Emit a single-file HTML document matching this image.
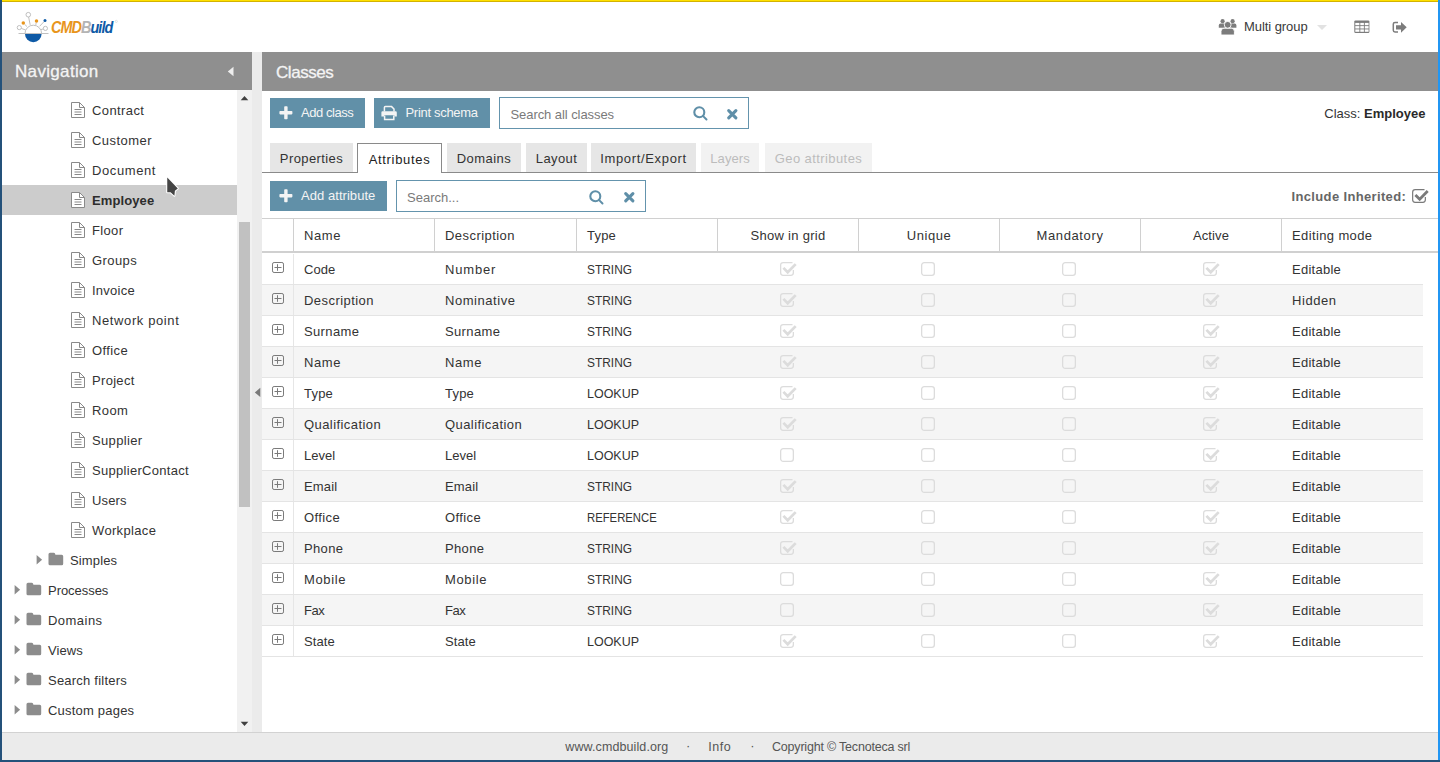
<!DOCTYPE html>
<html><head><meta charset="utf-8"><title>CMDBuild</title>
<style>
*{box-sizing:border-box;margin:0;padding:0}
html,body{width:1440px;height:762px;overflow:hidden;background:#fff;font-family:"Liberation Sans",sans-serif;color:#333;font-size:13px}
.a{position:absolute}
.t{position:absolute;white-space:nowrap;line-height:13px;font-size:13px}
svg{position:absolute;overflow:visible}
</style></head><body>
<svg style="left:0;top:0" width="130" height="50" viewBox="0 0 130 50">
<g stroke="#b9b9b9" stroke-width="0.9" fill="none">
<line x1="18.5" y1="33.5" x2="48.5" y2="33.5"/>
<path d="M25 33.5 A8.3 8.3 0 0 1 41.6 33.5"/>
<circle cx="28.3" cy="14.7" r="2.3" fill="#fff"/>
<line x1="28.6" y1="17.0" x2="30.2" y2="24.9"/>
<circle cx="19.3" cy="27.6" r="2.1" fill="#fff"/>
<line x1="21.3" y1="28.4" x2="25.6" y2="30.0"/>
<line x1="24.5" y1="24.2" x2="27.0" y2="26.6"/>
<line x1="36.2" y1="22.5" x2="35.8" y2="24.9"/>
<circle cx="45.4" cy="28.4" r="2.1" fill="#fff"/>
<line x1="43.3" y1="28.9" x2="41.0" y2="29.6"/>
<line x1="44.2" y1="21.5" x2="39.6" y2="26.3"/>
</g>
<path d="M25 34 H41.6 A8.3 8.3 0 0 1 25 34 Z" fill="#0e5aa6"/>
<circle cx="23.3" cy="23.1" r="1.75" fill="#e8951c"/>
<circle cx="36.5" cy="20.9" r="1.75" fill="#e8951c"/>
<circle cx="45.0" cy="20.5" r="1.5" fill="#0e5aa6"/>
<circle cx="116.3" cy="21.4" r="1.1" fill="none" stroke="#c9c9c9" stroke-width="0.5"/>
</svg>
<div class="t" style="left:50.8px;top:19.2px;font-size:16.5px;line-height:16.5px;font-weight:700;font-style:italic;letter-spacing:-1.1px;transform:scaleX(0.875);transform-origin:0 0"><span style="color:#e8951c">CMD</span><span style="color:#b4b4b4">B</span><span style="color:#0e5aa6">uild</span></div>
<svg style="left:1218px;top:18px" width="19" height="18" viewBox="1218 18 19 18" fill="#7c7c7c">
<circle cx="1222.6" cy="21.2" r="2.1"/><circle cx="1232.6" cy="21.2" r="2.1"/>
<path d="M1218.8 27.8 V25.4 Q1218.8 23.6 1220.6 23.6 H1224.6 Q1225.2 23.6 1225.2 24.4 V27.8 Z"/>
<path d="M1236.4 27.8 V25.4 Q1236.4 23.6 1234.6 23.6 H1230.6 Q1230 23.6 1230 24.4 V27.8 Z"/>
<path d="M1221 35 V31.4 Q1221 28.2 1224 28.2 H1231.4 Q1234.4 28.2 1234.4 31.4 V35 Z" stroke="#fff" stroke-width="0.9"/>
<circle cx="1227.7" cy="24.8" r="3.4" stroke="#fff" stroke-width="0.9"/>
</svg>
<div class="t" style="left:1244px;top:19.80px;font-size:13px;line-height:13px;color:#3a3a3a;font-weight:400;letter-spacing:-0.07px;">Multi group</div>
<svg style="left:1316px;top:24px" width="12" height="7" viewBox="0 0 12 7"><path d="M1 1 H11 L6 6 Z" fill="#e2e2e2"/></svg>
<svg style="left:1354px;top:20px" width="16" height="14" viewBox="1354 20 16 14">
<rect x="1354.3" y="20.4" width="15.1" height="12.5" rx="1.2" fill="#7c7c7c"/>
<g fill="#fff">
<rect x="1355.3" y="22.9" width="4.1" height="2.3"/><rect x="1360.3" y="22.9" width="3.6" height="2.3"/><rect x="1364.8" y="22.9" width="3.8" height="2.3"/>
<rect x="1355.3" y="26.1" width="4.1" height="2.4"/><rect x="1360.3" y="26.1" width="3.6" height="2.4"/><rect x="1364.8" y="26.1" width="3.8" height="2.4"/>
<rect x="1355.3" y="29.4" width="4.1" height="2.4"/><rect x="1360.3" y="29.4" width="3.6" height="2.4"/><rect x="1364.8" y="29.4" width="3.8" height="2.4"/>
</g></svg>
<svg style="left:1390px;top:20px" width="18" height="14" viewBox="1390 20 18 14">
<path d="M1398 22.4 H1395 Q1393.3 22.4 1393.3 24.1 V30.3 Q1393.3 32 1395 32 H1398" fill="none" stroke="#7c7c7c" stroke-width="1.5"/>
<path d="M1396 25.3 H1401 V22 L1406.7 27.3 L1401 32.7 V29.4 H1396 Z" fill="#7c7c7c"/>
</svg>
<div class="a" style="left:2px;top:52px;width:250px;height:38px;background:#8f8f8f;"></div>
<div class="t" style="left:15px;top:62.61px;font-size:17px;line-height:17px;color:#f4f4f4;font-weight:400;letter-spacing:0.33px;-webkit-text-stroke:0.3px #f4f4f4;">Navigation</div>
<svg style="left:227.2px;top:66px" width="8" height="11" viewBox="0 0 8 11"><path d="M6.5 0.8 V10.2 L0.8 5.5 Z" fill="#eeeeee"/></svg>
<div class="a" style="left:252px;top:52px;width:10px;height:680px;background:#ebebeb;"></div>
<div class="a" style="left:237px;top:90px;width:15px;height:642px;background:#f1f1f1;"></div>
<div class="a" style="left:239px;top:222px;width:11px;height:285px;background:#c1c1c1;"></div>
<svg style="left:240px;top:95px" width="9" height="6" viewBox="0 0 9 6"><path d="M0.7 5.2 H8.3 L4.5 0.9 Z" fill="#404040"/></svg>
<svg style="left:240px;top:721px" width="9" height="6" viewBox="0 0 9 6"><path d="M0.7 0.8 H8.3 L4.5 5.1 Z" fill="#404040"/></svg>
<svg style="left:254px;top:387px" width="7" height="11" viewBox="0 0 7 11"><path d="M6.3 0.8 V10 L0.8 5.4 Z" fill="#7a7a7a"/></svg>
<div class="a" style="left:2px;top:185px;width:235px;height:30px;background:#cccccc;"></div>
<svg style="left:70px;top:101px" width="16" height="18" viewBox="0 0 16 18">
<path d="M1.5 1.5 H9.5 L14.5 6.5 V16.5 H1.5 Z" fill="#fff" stroke="#8a8a8a" stroke-width="1"/>
<path d="M9.5 1.5 V6.5 H14.5" fill="none" stroke="#8a8a8a" stroke-width="1"/>
<g stroke="#8a8a8a" stroke-width="1"><line x1="4.5" y1="8.5" x2="11.5" y2="8.5"/><line x1="4.5" y1="11" x2="11.5" y2="11"/><line x1="4.5" y1="13.5" x2="11.5" y2="13.5"/></g>
</svg>
<div class="t" style="left:92px;top:104.00px;font-size:13px;line-height:13px;color:#333;font-weight:400;letter-spacing:0.399px;">Contract</div>
<svg style="left:70px;top:131px" width="16" height="18" viewBox="0 0 16 18">
<path d="M1.5 1.5 H9.5 L14.5 6.5 V16.5 H1.5 Z" fill="#fff" stroke="#8a8a8a" stroke-width="1"/>
<path d="M9.5 1.5 V6.5 H14.5" fill="none" stroke="#8a8a8a" stroke-width="1"/>
<g stroke="#8a8a8a" stroke-width="1"><line x1="4.5" y1="8.5" x2="11.5" y2="8.5"/><line x1="4.5" y1="11" x2="11.5" y2="11"/><line x1="4.5" y1="13.5" x2="11.5" y2="13.5"/></g>
</svg>
<div class="t" style="left:92px;top:134.00px;font-size:13px;line-height:13px;color:#333;font-weight:400;letter-spacing:0.451px;">Customer</div>
<svg style="left:70px;top:161px" width="16" height="18" viewBox="0 0 16 18">
<path d="M1.5 1.5 H9.5 L14.5 6.5 V16.5 H1.5 Z" fill="#fff" stroke="#8a8a8a" stroke-width="1"/>
<path d="M9.5 1.5 V6.5 H14.5" fill="none" stroke="#8a8a8a" stroke-width="1"/>
<g stroke="#8a8a8a" stroke-width="1"><line x1="4.5" y1="8.5" x2="11.5" y2="8.5"/><line x1="4.5" y1="11" x2="11.5" y2="11"/><line x1="4.5" y1="13.5" x2="11.5" y2="13.5"/></g>
</svg>
<div class="t" style="left:92px;top:164.00px;font-size:13px;line-height:13px;color:#333;font-weight:400;letter-spacing:0.6px;">Document</div>
<svg style="left:70px;top:191px" width="16" height="18" viewBox="0 0 16 18">
<path d="M1.5 1.5 H9.5 L14.5 6.5 V16.5 H1.5 Z" fill="#fff" stroke="#8a8a8a" stroke-width="1"/>
<path d="M9.5 1.5 V6.5 H14.5" fill="none" stroke="#8a8a8a" stroke-width="1"/>
<g stroke="#8a8a8a" stroke-width="1"><line x1="4.5" y1="8.5" x2="11.5" y2="8.5"/><line x1="4.5" y1="11" x2="11.5" y2="11"/><line x1="4.5" y1="13.5" x2="11.5" y2="13.5"/></g>
</svg>
<div class="t" style="left:92px;top:194.00px;font-size:13px;line-height:13px;color:#2d2d2d;font-weight:700;letter-spacing:0.1px;">Employee</div>
<svg style="left:70px;top:221px" width="16" height="18" viewBox="0 0 16 18">
<path d="M1.5 1.5 H9.5 L14.5 6.5 V16.5 H1.5 Z" fill="#fff" stroke="#8a8a8a" stroke-width="1"/>
<path d="M9.5 1.5 V6.5 H14.5" fill="none" stroke="#8a8a8a" stroke-width="1"/>
<g stroke="#8a8a8a" stroke-width="1"><line x1="4.5" y1="8.5" x2="11.5" y2="8.5"/><line x1="4.5" y1="11" x2="11.5" y2="11"/><line x1="4.5" y1="13.5" x2="11.5" y2="13.5"/></g>
</svg>
<div class="t" style="left:92px;top:224.00px;font-size:13px;line-height:13px;color:#333;font-weight:400;letter-spacing:0.346px;">Floor</div>
<svg style="left:70px;top:251px" width="16" height="18" viewBox="0 0 16 18">
<path d="M1.5 1.5 H9.5 L14.5 6.5 V16.5 H1.5 Z" fill="#fff" stroke="#8a8a8a" stroke-width="1"/>
<path d="M9.5 1.5 V6.5 H14.5" fill="none" stroke="#8a8a8a" stroke-width="1"/>
<g stroke="#8a8a8a" stroke-width="1"><line x1="4.5" y1="8.5" x2="11.5" y2="8.5"/><line x1="4.5" y1="11" x2="11.5" y2="11"/><line x1="4.5" y1="13.5" x2="11.5" y2="13.5"/></g>
</svg>
<div class="t" style="left:92px;top:254.00px;font-size:13px;line-height:13px;color:#333;font-weight:400;letter-spacing:0.426px;">Groups</div>
<svg style="left:70px;top:281px" width="16" height="18" viewBox="0 0 16 18">
<path d="M1.5 1.5 H9.5 L14.5 6.5 V16.5 H1.5 Z" fill="#fff" stroke="#8a8a8a" stroke-width="1"/>
<path d="M9.5 1.5 V6.5 H14.5" fill="none" stroke="#8a8a8a" stroke-width="1"/>
<g stroke="#8a8a8a" stroke-width="1"><line x1="4.5" y1="8.5" x2="11.5" y2="8.5"/><line x1="4.5" y1="11" x2="11.5" y2="11"/><line x1="4.5" y1="13.5" x2="11.5" y2="13.5"/></g>
</svg>
<div class="t" style="left:92px;top:284.00px;font-size:13px;line-height:13px;color:#333;font-weight:400;letter-spacing:0.256px;">Invoice</div>
<svg style="left:70px;top:311px" width="16" height="18" viewBox="0 0 16 18">
<path d="M1.5 1.5 H9.5 L14.5 6.5 V16.5 H1.5 Z" fill="#fff" stroke="#8a8a8a" stroke-width="1"/>
<path d="M9.5 1.5 V6.5 H14.5" fill="none" stroke="#8a8a8a" stroke-width="1"/>
<g stroke="#8a8a8a" stroke-width="1"><line x1="4.5" y1="8.5" x2="11.5" y2="8.5"/><line x1="4.5" y1="11" x2="11.5" y2="11"/><line x1="4.5" y1="13.5" x2="11.5" y2="13.5"/></g>
</svg>
<div class="t" style="left:92px;top:314.00px;font-size:13px;line-height:13px;color:#333;font-weight:400;letter-spacing:0.612px;">Network point</div>
<svg style="left:70px;top:341px" width="16" height="18" viewBox="0 0 16 18">
<path d="M1.5 1.5 H9.5 L14.5 6.5 V16.5 H1.5 Z" fill="#fff" stroke="#8a8a8a" stroke-width="1"/>
<path d="M9.5 1.5 V6.5 H14.5" fill="none" stroke="#8a8a8a" stroke-width="1"/>
<g stroke="#8a8a8a" stroke-width="1"><line x1="4.5" y1="8.5" x2="11.5" y2="8.5"/><line x1="4.5" y1="11" x2="11.5" y2="11"/><line x1="4.5" y1="13.5" x2="11.5" y2="13.5"/></g>
</svg>
<div class="t" style="left:92px;top:344.00px;font-size:13px;line-height:13px;color:#333;font-weight:400;letter-spacing:0.397px;">Office</div>
<svg style="left:70px;top:371px" width="16" height="18" viewBox="0 0 16 18">
<path d="M1.5 1.5 H9.5 L14.5 6.5 V16.5 H1.5 Z" fill="#fff" stroke="#8a8a8a" stroke-width="1"/>
<path d="M9.5 1.5 V6.5 H14.5" fill="none" stroke="#8a8a8a" stroke-width="1"/>
<g stroke="#8a8a8a" stroke-width="1"><line x1="4.5" y1="8.5" x2="11.5" y2="8.5"/><line x1="4.5" y1="11" x2="11.5" y2="11"/><line x1="4.5" y1="13.5" x2="11.5" y2="13.5"/></g>
</svg>
<div class="t" style="left:92px;top:374.00px;font-size:13px;line-height:13px;color:#333;font-weight:400;letter-spacing:0.313px;">Project</div>
<svg style="left:70px;top:401px" width="16" height="18" viewBox="0 0 16 18">
<path d="M1.5 1.5 H9.5 L14.5 6.5 V16.5 H1.5 Z" fill="#fff" stroke="#8a8a8a" stroke-width="1"/>
<path d="M9.5 1.5 V6.5 H14.5" fill="none" stroke="#8a8a8a" stroke-width="1"/>
<g stroke="#8a8a8a" stroke-width="1"><line x1="4.5" y1="8.5" x2="11.5" y2="8.5"/><line x1="4.5" y1="11" x2="11.5" y2="11"/><line x1="4.5" y1="13.5" x2="11.5" y2="13.5"/></g>
</svg>
<div class="t" style="left:92px;top:404.00px;font-size:13px;line-height:13px;color:#333;font-weight:400;letter-spacing:0.382px;">Room</div>
<svg style="left:70px;top:431px" width="16" height="18" viewBox="0 0 16 18">
<path d="M1.5 1.5 H9.5 L14.5 6.5 V16.5 H1.5 Z" fill="#fff" stroke="#8a8a8a" stroke-width="1"/>
<path d="M9.5 1.5 V6.5 H14.5" fill="none" stroke="#8a8a8a" stroke-width="1"/>
<g stroke="#8a8a8a" stroke-width="1"><line x1="4.5" y1="8.5" x2="11.5" y2="8.5"/><line x1="4.5" y1="11" x2="11.5" y2="11"/><line x1="4.5" y1="13.5" x2="11.5" y2="13.5"/></g>
</svg>
<div class="t" style="left:92px;top:434.00px;font-size:13px;line-height:13px;color:#333;font-weight:400;letter-spacing:0.342px;">Supplier</div>
<svg style="left:70px;top:461px" width="16" height="18" viewBox="0 0 16 18">
<path d="M1.5 1.5 H9.5 L14.5 6.5 V16.5 H1.5 Z" fill="#fff" stroke="#8a8a8a" stroke-width="1"/>
<path d="M9.5 1.5 V6.5 H14.5" fill="none" stroke="#8a8a8a" stroke-width="1"/>
<g stroke="#8a8a8a" stroke-width="1"><line x1="4.5" y1="8.5" x2="11.5" y2="8.5"/><line x1="4.5" y1="11" x2="11.5" y2="11"/><line x1="4.5" y1="13.5" x2="11.5" y2="13.5"/></g>
</svg>
<div class="t" style="left:92px;top:464.00px;font-size:13px;line-height:13px;color:#333;font-weight:400;letter-spacing:0.302px;">SupplierContact</div>
<svg style="left:70px;top:491px" width="16" height="18" viewBox="0 0 16 18">
<path d="M1.5 1.5 H9.5 L14.5 6.5 V16.5 H1.5 Z" fill="#fff" stroke="#8a8a8a" stroke-width="1"/>
<path d="M9.5 1.5 V6.5 H14.5" fill="none" stroke="#8a8a8a" stroke-width="1"/>
<g stroke="#8a8a8a" stroke-width="1"><line x1="4.5" y1="8.5" x2="11.5" y2="8.5"/><line x1="4.5" y1="11" x2="11.5" y2="11"/><line x1="4.5" y1="13.5" x2="11.5" y2="13.5"/></g>
</svg>
<div class="t" style="left:92px;top:494.00px;font-size:13px;line-height:13px;color:#333;font-weight:400;letter-spacing:0.141px;">Users</div>
<svg style="left:70px;top:521px" width="16" height="18" viewBox="0 0 16 18">
<path d="M1.5 1.5 H9.5 L14.5 6.5 V16.5 H1.5 Z" fill="#fff" stroke="#8a8a8a" stroke-width="1"/>
<path d="M9.5 1.5 V6.5 H14.5" fill="none" stroke="#8a8a8a" stroke-width="1"/>
<g stroke="#8a8a8a" stroke-width="1"><line x1="4.5" y1="8.5" x2="11.5" y2="8.5"/><line x1="4.5" y1="11" x2="11.5" y2="11"/><line x1="4.5" y1="13.5" x2="11.5" y2="13.5"/></g>
</svg>
<div class="t" style="left:92px;top:524.00px;font-size:13px;line-height:13px;color:#333;font-weight:400;letter-spacing:0.34px;">Workplace</div>
<svg style="left:35.5px;top:554.0px" width="8" height="12" viewBox="0 0 8 12"><path d="M0.6 1.1 L6.1 5.75 L0.6 10.4 Z" fill="#8c8c8c"/></svg>
<svg style="left:48px;top:552.0px" width="16" height="14" viewBox="0 0 16 14">
<path d="M0.5 2.2 Q0.5 0.7 2 0.7 H5.6 Q6.9 0.7 7.2 2.0 L7.4 2.8 H13.7 Q15.2 2.8 15.2 4.3 V11.75 Q15.2 13.25 13.7 13.25 H2 Q0.5 13.25 0.5 11.75 Z" fill="#8c8c8c"/>
</svg>
<div class="t" style="left:70px;top:554.00px;font-size:13px;line-height:13px;color:#333;font-weight:400;letter-spacing:0.148px;">Simples</div>
<svg style="left:13.5px;top:584.0px" width="8" height="12" viewBox="0 0 8 12"><path d="M0.6 1.1 L6.1 5.75 L0.6 10.4 Z" fill="#8c8c8c"/></svg>
<svg style="left:26px;top:582.0px" width="16" height="14" viewBox="0 0 16 14">
<path d="M0.5 2.2 Q0.5 0.7 2 0.7 H5.6 Q6.9 0.7 7.2 2.0 L7.4 2.8 H13.7 Q15.2 2.8 15.2 4.3 V11.75 Q15.2 13.25 13.7 13.25 H2 Q0.5 13.25 0.5 11.75 Z" fill="#8c8c8c"/>
</svg>
<div class="t" style="left:48px;top:584.00px;font-size:13px;line-height:13px;color:#333;font-weight:400;letter-spacing:-0.042px;">Processes</div>
<svg style="left:13.5px;top:614.0px" width="8" height="12" viewBox="0 0 8 12"><path d="M0.6 1.1 L6.1 5.75 L0.6 10.4 Z" fill="#8c8c8c"/></svg>
<svg style="left:26px;top:612.0px" width="16" height="14" viewBox="0 0 16 14">
<path d="M0.5 2.2 Q0.5 0.7 2 0.7 H5.6 Q6.9 0.7 7.2 2.0 L7.4 2.8 H13.7 Q15.2 2.8 15.2 4.3 V11.75 Q15.2 13.25 13.7 13.25 H2 Q0.5 13.25 0.5 11.75 Z" fill="#8c8c8c"/>
</svg>
<div class="t" style="left:48px;top:614.00px;font-size:13px;line-height:13px;color:#333;font-weight:400;letter-spacing:0.471px;">Domains</div>
<svg style="left:13.5px;top:644.0px" width="8" height="12" viewBox="0 0 8 12"><path d="M0.6 1.1 L6.1 5.75 L0.6 10.4 Z" fill="#8c8c8c"/></svg>
<svg style="left:26px;top:642.0px" width="16" height="14" viewBox="0 0 16 14">
<path d="M0.5 2.2 Q0.5 0.7 2 0.7 H5.6 Q6.9 0.7 7.2 2.0 L7.4 2.8 H13.7 Q15.2 2.8 15.2 4.3 V11.75 Q15.2 13.25 13.7 13.25 H2 Q0.5 13.25 0.5 11.75 Z" fill="#8c8c8c"/>
</svg>
<div class="t" style="left:48px;top:644.00px;font-size:13px;line-height:13px;color:#333;font-weight:400;letter-spacing:0.048px;">Views</div>
<svg style="left:13.5px;top:674.0px" width="8" height="12" viewBox="0 0 8 12"><path d="M0.6 1.1 L6.1 5.75 L0.6 10.4 Z" fill="#8c8c8c"/></svg>
<svg style="left:26px;top:672.0px" width="16" height="14" viewBox="0 0 16 14">
<path d="M0.5 2.2 Q0.5 0.7 2 0.7 H5.6 Q6.9 0.7 7.2 2.0 L7.4 2.8 H13.7 Q15.2 2.8 15.2 4.3 V11.75 Q15.2 13.25 13.7 13.25 H2 Q0.5 13.25 0.5 11.75 Z" fill="#8c8c8c"/>
</svg>
<div class="t" style="left:48px;top:674.00px;font-size:13px;line-height:13px;color:#333;font-weight:400;letter-spacing:0.222px;">Search filters</div>
<svg style="left:13.5px;top:704.0px" width="8" height="12" viewBox="0 0 8 12"><path d="M0.6 1.1 L6.1 5.75 L0.6 10.4 Z" fill="#8c8c8c"/></svg>
<svg style="left:26px;top:702.0px" width="16" height="14" viewBox="0 0 16 14">
<path d="M0.5 2.2 Q0.5 0.7 2 0.7 H5.6 Q6.9 0.7 7.2 2.0 L7.4 2.8 H13.7 Q15.2 2.8 15.2 4.3 V11.75 Q15.2 13.25 13.7 13.25 H2 Q0.5 13.25 0.5 11.75 Z" fill="#8c8c8c"/>
</svg>
<div class="t" style="left:48px;top:704.00px;font-size:13px;line-height:13px;color:#333;font-weight:400;letter-spacing:0.207px;">Custom pages</div>
<svg style="left:160px;top:170px" width="24" height="30" viewBox="160 170 24 30">
<path d="M167.25 177.4 V192.3 H170.6 L174.4 195.7 L174.9 190.8 L177.8 188.4 Z" fill="#444" stroke="#fff" stroke-width="2.1" stroke-linejoin="round" paint-order="stroke"/>
</svg>
<div class="a" style="left:262px;top:52px;width:1176px;height:39px;background:#8f8f8f;"></div>
<div class="t" style="left:276px;top:63.61px;font-size:17px;line-height:17px;color:#f4f4f4;font-weight:400;letter-spacing:-0.45px;-webkit-text-stroke:0.3px #f4f4f4;">Classes</div>
<div class="a" style="left:270px;top:98px;width:95px;height:30px;background:#6190a8;"></div>
<svg style="left:278.5px;top:105.6px" width="14" height="14" viewBox="0 0 14 14"><path d="M5.2 1 Q5.2 0.2 6 0.2 H7.8 Q8.6 0.2 8.6 1 V5 H12.6 Q13.4 5 13.4 5.8 V7.6 Q13.4 8.4 12.6 8.4 H8.6 V12.4 Q8.6 13.2 7.8 13.2 H6 Q5.2 13.2 5.2 12.4 V8.4 H1.2 Q0.4 8.4 0.4 7.6 V5.8 Q0.4 5 1.2 5 H5.2 Z" fill="#f4f4f4"/></svg>
<div class="t" style="left:301px;top:106.00px;font-size:13px;line-height:13px;color:#f4f4f4;font-weight:400;letter-spacing:-0.45px;">Add class</div>
<div class="a" style="left:374px;top:98px;width:116px;height:30px;background:#6190a8;"></div>
<svg style="left:381px;top:106px" width="17" height="15" viewBox="0 0 17 15">
<path d="M3.4 5.5 V1.6 Q3.4 0.6 4.4 0.6 H10.6 L13 3 V5.5" fill="none" stroke="#f4f4f4" stroke-width="1.5"/>
<path d="M1.5 5.2 H14.6 Q15.8 5.2 15.8 6.4 V10.6 H13.4 V9.2 H3.0 V10.6 H0.4 V6.4 Q0.4 5.2 1.5 5.2 Z" fill="#f4f4f4"/>
<path d="M3.6 9.6 V13.6 H12.8 V9.6" fill="none" stroke="#f4f4f4" stroke-width="1.5"/>
</svg>
<div class="t" style="left:405.5px;top:106.20px;font-size:13px;line-height:13px;color:#f4f4f4;font-weight:400;letter-spacing:-0.3px;">Print schema</div>
<div class="a" style="left:499px;top:97px;width:250px;height:32px;background:#fff;border:1px solid #6494ad"></div>
<div class="t" style="left:510.5px;top:107.80px;font-size:13px;line-height:13px;color:#7a7a7a;font-weight:400;letter-spacing:-0.07px;">Search all classes</div>
<svg style="left:692.5px;top:106.3px" width="16" height="16" viewBox="0 0 16 16">
<circle cx="6.3" cy="6.3" r="5.0" fill="none" stroke="#5f8fa8" stroke-width="2.1"/>
<line x1="9.9" y1="9.9" x2="13.5" y2="13.5" stroke="#5f8fa8" stroke-width="2.0" stroke-linecap="round"/>
</svg>
<svg style="left:726.9px;top:108.6px" width="12" height="12" viewBox="0 0 12 12">
<path d="M1.7 1.7 L8.9 8.9 M8.9 1.7 L1.7 8.9" stroke="#5f8fa8" stroke-width="3.1" stroke-linecap="round"/>
</svg>
<div class="t" style="left:1324.3px;top:106.80px;font-size:13px;line-height:13px;color:#333;font-weight:400;letter-spacing:0px;">Class: <b style="color:#2a2a2a">Employee</b></div>
<div class="a" style="left:262px;top:172px;width:1176px;height:1px;background:#8a8a8a;"></div>
<div class="a" style="left:270px;top:143px;width:83px;height:29px;background:#e6e6e6;"></div>
<div class="t" style="left:270.0px;width:83px;text-align:center;top:152.00px;font-size:13px;line-height:13px;color:#333;font-weight:400;letter-spacing:0.408px">Properties</div>
<div class="a" style="left:357px;top:143px;width:85px;height:30px;background:#fff;border:1px solid #8a8a8a;border-bottom:none"></div>
<div class="t" style="left:357.0px;width:85px;text-align:center;top:153.00px;font-size:13px;line-height:13px;color:#222;font-weight:400;letter-spacing:0.6679999999999999px">Attributes</div>
<div class="a" style="left:447px;top:143px;width:74px;height:29px;background:#e6e6e6;"></div>
<div class="t" style="left:447.0px;width:74px;text-align:center;top:152.00px;font-size:13px;line-height:13px;color:#333;font-weight:400;letter-spacing:0.471px">Domains</div>
<div class="a" style="left:526px;top:143px;width:61px;height:29px;background:#e6e6e6;"></div>
<div class="t" style="left:526.0px;width:61px;text-align:center;top:152.00px;font-size:13px;line-height:13px;color:#333;font-weight:400;letter-spacing:0.388px">Layout</div>
<div class="a" style="left:591px;top:143px;width:105px;height:29px;background:#e6e6e6;"></div>
<div class="t" style="left:591.0px;width:105px;text-align:center;top:152.00px;font-size:13px;line-height:13px;color:#333;font-weight:400;letter-spacing:0.661px">Import/Export</div>
<div class="a" style="left:701px;top:143px;width:58px;height:29px;background:#f2f2f2;"></div>
<div class="t" style="left:701.0px;width:58px;text-align:center;top:152.00px;font-size:13px;line-height:13px;color:#bcbcbc;font-weight:400;letter-spacing:0.067px">Layers</div>
<div class="a" style="left:765px;top:143px;width:107px;height:29px;background:#f2f2f2;"></div>
<div class="t" style="left:765.0px;width:107px;text-align:center;top:152.00px;font-size:13px;line-height:13px;color:#bcbcbc;font-weight:400;letter-spacing:0.413px">Geo attributes</div>
<div class="a" style="left:270px;top:181px;width:117px;height:30px;background:#6190a8;"></div>
<svg style="left:278.5px;top:188.8px" width="14" height="14" viewBox="0 0 14 14"><path d="M5.2 1 Q5.2 0.2 6 0.2 H7.8 Q8.6 0.2 8.6 1 V5 H12.6 Q13.4 5 13.4 5.8 V7.6 Q13.4 8.4 12.6 8.4 H8.6 V12.4 Q8.6 13.2 7.8 13.2 H6 Q5.2 13.2 5.2 12.4 V8.4 H1.2 Q0.4 8.4 0.4 7.6 V5.8 Q0.4 5 1.2 5 H5.2 Z" fill="#f4f4f4"/></svg>
<div class="t" style="left:301px;top:189.30px;font-size:13px;line-height:13px;color:#f4f4f4;font-weight:400;letter-spacing:0.05px;">Add attribute</div>
<div class="a" style="left:396px;top:180px;width:250px;height:32px;background:#fff;border:1px solid #6494ad"></div>
<div class="t" style="left:407px;top:190.60px;font-size:13px;line-height:13px;color:#7a7a7a;font-weight:400;letter-spacing:0px;">Search...</div>
<svg style="left:589.1px;top:189.7px" width="16" height="16" viewBox="0 0 16 16">
<circle cx="6.3" cy="6.3" r="5.0" fill="none" stroke="#5f8fa8" stroke-width="2.1"/>
<line x1="9.9" y1="9.9" x2="13.5" y2="13.5" stroke="#5f8fa8" stroke-width="2.0" stroke-linecap="round"/>
</svg>
<svg style="left:624px;top:191.5px" width="12" height="12" viewBox="0 0 12 12">
<path d="M1.7 1.7 L8.9 8.9 M8.9 1.7 L1.7 8.9" stroke="#5f8fa8" stroke-width="3.1" stroke-linecap="round"/>
</svg>
<div class="t" style="left:1291.5px;top:190.10px;font-size:13px;line-height:13px;color:#666;font-weight:700;letter-spacing:0.35px;">Include Inherited:</div>
<svg style="left:1411.1px;top:188px" width="19" height="16" viewBox="-1 -1 19 16">
<path d="M12.5 0.65 H3.15 Q0.65 0.65 0.65 3.15 V10.85 Q0.65 13.35 3.15 13.35 H10.85 Q13.35 13.35 13.35 10.85 V8" fill="none" stroke="#7a7a7a" stroke-width="1.2"/>
<path d="M3.4 5.9 L7.7 10.3 L15.7 2.1" fill="none" stroke="#7a7a7a" stroke-width="2.8" stroke-linejoin="miter"/>
</svg>
<div class="a" style="left:262px;top:218px;width:1176px;height:1px;background:#d0d0d0;"></div>
<div class="a" style="left:262px;top:251px;width:1176px;height:2px;background:#d0d0d0;"></div>
<div class="a" style="left:293px;top:219px;width:1px;height:32px;background:#d0d0d0;"></div>
<div class="a" style="left:434px;top:219px;width:1px;height:32px;background:#d0d0d0;"></div>
<div class="a" style="left:576px;top:219px;width:1px;height:32px;background:#d0d0d0;"></div>
<div class="a" style="left:717px;top:219px;width:1px;height:32px;background:#d0d0d0;"></div>
<div class="a" style="left:858px;top:219px;width:1px;height:32px;background:#d0d0d0;"></div>
<div class="a" style="left:999px;top:219px;width:1px;height:32px;background:#d0d0d0;"></div>
<div class="a" style="left:1140px;top:219px;width:1px;height:32px;background:#d0d0d0;"></div>
<div class="a" style="left:1281px;top:219px;width:1px;height:32px;background:#d0d0d0;"></div>
<div class="t" style="left:304px;top:229.00px;font-size:13px;line-height:13px;color:#333;font-weight:400;letter-spacing:0.576px;">Name</div>
<div class="t" style="left:445px;top:229.00px;font-size:13px;line-height:13px;color:#333;font-weight:400;letter-spacing:0.44px;">Description</div>
<div class="t" style="left:587px;top:229.00px;font-size:13px;line-height:13px;color:#333;font-weight:400;letter-spacing:0.223px;">Type</div>
<div class="t" style="left:717.5px;width:141px;text-align:center;top:229.00px;font-size:13px;line-height:13px;color:#333;font-weight:400;letter-spacing:0.283px">Show in grid</div>
<div class="t" style="left:858.5px;width:141px;text-align:center;top:229.00px;font-size:13px;line-height:13px;color:#333;font-weight:400;letter-spacing:0.564px">Unique</div>
<div class="t" style="left:999.5px;width:141px;text-align:center;top:229.00px;font-size:13px;line-height:13px;color:#333;font-weight:400;letter-spacing:0.624px">Mandatory</div>
<div class="t" style="left:1140.5px;width:141px;text-align:center;top:229.00px;font-size:13px;line-height:13px;color:#333;font-weight:400;letter-spacing:0.139px">Active</div>
<div class="t" style="left:1292px;top:229.00px;font-size:13px;line-height:13px;color:#333;font-weight:400;letter-spacing:0.378px;">Editing mode</div>
<div class="a" style="left:262px;top:254px;width:1161px;height:31px;background:#fff;border-bottom:1px solid #e4e4e4"></div>
<div class="a" style="left:293px;top:254px;width:1px;height:30px;background:#e6e6e6;"></div>
<svg style="left:272px;top:262px" width="13" height="12" viewBox="0 0 13 12">
<rect x="0.5" y="0.5" width="11" height="10" rx="1.6" fill="none" stroke="#7a7a7a" stroke-width="1"/>
<path d="M2.5 5.5 H9.5 M5.5 2.2 V8.8" stroke="#7a7a7a" stroke-width="1"/>
</svg>
<div class="t" style="left:304px;top:262.50px;font-size:13px;line-height:13px;color:#333;font-weight:400;letter-spacing:0.078px;">Code</div>
<div class="t" style="left:445px;top:262.50px;font-size:13px;line-height:13px;color:#333;font-weight:400;letter-spacing:0.838px;">Number</div>
<div class="t" style="left:587px;top:262.50px;font-size:13px;line-height:13px;color:#333;font-weight:400;letter-spacing:0px;transform:scaleX(0.9161);transform-origin:0 0;">STRING</div>
<svg style="left:779.2px;top:261.1px" width="19" height="16" viewBox="-1 -1 19 16">
<path d="M12.5 0.65 H3.15 Q0.65 0.65 0.65 3.15 V10.85 Q0.65 13.35 3.15 13.35 H10.85 Q13.35 13.35 13.35 10.85 V8" fill="none" stroke="#dcdcdc" stroke-width="1.3"/>
<path d="M3.4 5.9 L7.7 10.3 L15.7 2.1" fill="none" stroke="#dcdcdc" stroke-width="2.7" stroke-linejoin="miter"/>
</svg>
<svg style="left:920.3px;top:261.3px" width="16" height="16" viewBox="-1 -1 16 16"><rect x="0.65" y="0.65" width="12.7" height="12.7" rx="2.6" fill="none" stroke="#dcdcdc" stroke-width="1.3"/></svg>
<svg style="left:1061.3px;top:261.3px" width="16" height="16" viewBox="-1 -1 16 16"><rect x="0.65" y="0.65" width="12.7" height="12.7" rx="2.6" fill="none" stroke="#dcdcdc" stroke-width="1.3"/></svg>
<svg style="left:1202.2px;top:261.1px" width="19" height="16" viewBox="-1 -1 19 16">
<path d="M12.5 0.65 H3.15 Q0.65 0.65 0.65 3.15 V10.85 Q0.65 13.35 3.15 13.35 H10.85 Q13.35 13.35 13.35 10.85 V8" fill="none" stroke="#dcdcdc" stroke-width="1.3"/>
<path d="M3.4 5.9 L7.7 10.3 L15.7 2.1" fill="none" stroke="#dcdcdc" stroke-width="2.7" stroke-linejoin="miter"/>
</svg>
<div class="t" style="left:1292px;top:262.50px;font-size:13px;line-height:13px;color:#333;font-weight:400;letter-spacing:0.267px;">Editable</div>
<div class="a" style="left:262px;top:285px;width:1161px;height:31px;background:#f5f5f5;border-bottom:1px solid #e4e4e4"></div>
<div class="a" style="left:293px;top:285px;width:1px;height:30px;background:#e6e6e6;"></div>
<svg style="left:272px;top:293px" width="13" height="12" viewBox="0 0 13 12">
<rect x="0.5" y="0.5" width="11" height="10" rx="1.6" fill="none" stroke="#7a7a7a" stroke-width="1"/>
<path d="M2.5 5.5 H9.5 M5.5 2.2 V8.8" stroke="#7a7a7a" stroke-width="1"/>
</svg>
<div class="t" style="left:304px;top:293.50px;font-size:13px;line-height:13px;color:#333;font-weight:400;letter-spacing:0.44px;">Description</div>
<div class="t" style="left:445px;top:293.50px;font-size:13px;line-height:13px;color:#333;font-weight:400;letter-spacing:0.544px;">Nominative</div>
<div class="t" style="left:587px;top:293.50px;font-size:13px;line-height:13px;color:#333;font-weight:400;letter-spacing:0px;transform:scaleX(0.9161);transform-origin:0 0;">STRING</div>
<svg style="left:779.2px;top:292.1px" width="19" height="16" viewBox="-1 -1 19 16">
<path d="M12.5 0.65 H3.15 Q0.65 0.65 0.65 3.15 V10.85 Q0.65 13.35 3.15 13.35 H10.85 Q13.35 13.35 13.35 10.85 V8" fill="none" stroke="#dcdcdc" stroke-width="1.3"/>
<path d="M3.4 5.9 L7.7 10.3 L15.7 2.1" fill="none" stroke="#dcdcdc" stroke-width="2.7" stroke-linejoin="miter"/>
</svg>
<svg style="left:920.3px;top:292.3px" width="16" height="16" viewBox="-1 -1 16 16"><rect x="0.65" y="0.65" width="12.7" height="12.7" rx="2.6" fill="none" stroke="#dcdcdc" stroke-width="1.3"/></svg>
<svg style="left:1061.3px;top:292.3px" width="16" height="16" viewBox="-1 -1 16 16"><rect x="0.65" y="0.65" width="12.7" height="12.7" rx="2.6" fill="none" stroke="#dcdcdc" stroke-width="1.3"/></svg>
<svg style="left:1202.2px;top:292.1px" width="19" height="16" viewBox="-1 -1 19 16">
<path d="M12.5 0.65 H3.15 Q0.65 0.65 0.65 3.15 V10.85 Q0.65 13.35 3.15 13.35 H10.85 Q13.35 13.35 13.35 10.85 V8" fill="none" stroke="#dcdcdc" stroke-width="1.3"/>
<path d="M3.4 5.9 L7.7 10.3 L15.7 2.1" fill="none" stroke="#dcdcdc" stroke-width="2.7" stroke-linejoin="miter"/>
</svg>
<div class="t" style="left:1292px;top:293.50px;font-size:13px;line-height:13px;color:#333;font-weight:400;letter-spacing:0.576px;">Hidden</div>
<div class="a" style="left:262px;top:316px;width:1161px;height:31px;background:#fff;border-bottom:1px solid #e4e4e4"></div>
<div class="a" style="left:293px;top:316px;width:1px;height:30px;background:#e6e6e6;"></div>
<svg style="left:272px;top:324px" width="13" height="12" viewBox="0 0 13 12">
<rect x="0.5" y="0.5" width="11" height="10" rx="1.6" fill="none" stroke="#7a7a7a" stroke-width="1"/>
<path d="M2.5 5.5 H9.5 M5.5 2.2 V8.8" stroke="#7a7a7a" stroke-width="1"/>
</svg>
<div class="t" style="left:304px;top:324.50px;font-size:13px;line-height:13px;color:#333;font-weight:400;letter-spacing:0.356px;">Surname</div>
<div class="t" style="left:445px;top:324.50px;font-size:13px;line-height:13px;color:#333;font-weight:400;letter-spacing:0.356px;">Surname</div>
<div class="t" style="left:587px;top:324.50px;font-size:13px;line-height:13px;color:#333;font-weight:400;letter-spacing:0px;transform:scaleX(0.9161);transform-origin:0 0;">STRING</div>
<svg style="left:779.2px;top:323.1px" width="19" height="16" viewBox="-1 -1 19 16">
<path d="M12.5 0.65 H3.15 Q0.65 0.65 0.65 3.15 V10.85 Q0.65 13.35 3.15 13.35 H10.85 Q13.35 13.35 13.35 10.85 V8" fill="none" stroke="#dcdcdc" stroke-width="1.3"/>
<path d="M3.4 5.9 L7.7 10.3 L15.7 2.1" fill="none" stroke="#dcdcdc" stroke-width="2.7" stroke-linejoin="miter"/>
</svg>
<svg style="left:920.3px;top:323.3px" width="16" height="16" viewBox="-1 -1 16 16"><rect x="0.65" y="0.65" width="12.7" height="12.7" rx="2.6" fill="none" stroke="#dcdcdc" stroke-width="1.3"/></svg>
<svg style="left:1061.3px;top:323.3px" width="16" height="16" viewBox="-1 -1 16 16"><rect x="0.65" y="0.65" width="12.7" height="12.7" rx="2.6" fill="none" stroke="#dcdcdc" stroke-width="1.3"/></svg>
<svg style="left:1202.2px;top:323.1px" width="19" height="16" viewBox="-1 -1 19 16">
<path d="M12.5 0.65 H3.15 Q0.65 0.65 0.65 3.15 V10.85 Q0.65 13.35 3.15 13.35 H10.85 Q13.35 13.35 13.35 10.85 V8" fill="none" stroke="#dcdcdc" stroke-width="1.3"/>
<path d="M3.4 5.9 L7.7 10.3 L15.7 2.1" fill="none" stroke="#dcdcdc" stroke-width="2.7" stroke-linejoin="miter"/>
</svg>
<div class="t" style="left:1292px;top:324.50px;font-size:13px;line-height:13px;color:#333;font-weight:400;letter-spacing:0.267px;">Editable</div>
<div class="a" style="left:262px;top:347px;width:1161px;height:31px;background:#f5f5f5;border-bottom:1px solid #e4e4e4"></div>
<div class="a" style="left:293px;top:347px;width:1px;height:30px;background:#e6e6e6;"></div>
<svg style="left:272px;top:355px" width="13" height="12" viewBox="0 0 13 12">
<rect x="0.5" y="0.5" width="11" height="10" rx="1.6" fill="none" stroke="#7a7a7a" stroke-width="1"/>
<path d="M2.5 5.5 H9.5 M5.5 2.2 V8.8" stroke="#7a7a7a" stroke-width="1"/>
</svg>
<div class="t" style="left:304px;top:355.50px;font-size:13px;line-height:13px;color:#333;font-weight:400;letter-spacing:0.576px;">Name</div>
<div class="t" style="left:445px;top:355.50px;font-size:13px;line-height:13px;color:#333;font-weight:400;letter-spacing:0.576px;">Name</div>
<div class="t" style="left:587px;top:355.50px;font-size:13px;line-height:13px;color:#333;font-weight:400;letter-spacing:0px;transform:scaleX(0.9161);transform-origin:0 0;">STRING</div>
<svg style="left:779.2px;top:354.1px" width="19" height="16" viewBox="-1 -1 19 16">
<path d="M12.5 0.65 H3.15 Q0.65 0.65 0.65 3.15 V10.85 Q0.65 13.35 3.15 13.35 H10.85 Q13.35 13.35 13.35 10.85 V8" fill="none" stroke="#dcdcdc" stroke-width="1.3"/>
<path d="M3.4 5.9 L7.7 10.3 L15.7 2.1" fill="none" stroke="#dcdcdc" stroke-width="2.7" stroke-linejoin="miter"/>
</svg>
<svg style="left:920.3px;top:354.3px" width="16" height="16" viewBox="-1 -1 16 16"><rect x="0.65" y="0.65" width="12.7" height="12.7" rx="2.6" fill="none" stroke="#dcdcdc" stroke-width="1.3"/></svg>
<svg style="left:1061.3px;top:354.3px" width="16" height="16" viewBox="-1 -1 16 16"><rect x="0.65" y="0.65" width="12.7" height="12.7" rx="2.6" fill="none" stroke="#dcdcdc" stroke-width="1.3"/></svg>
<svg style="left:1202.2px;top:354.1px" width="19" height="16" viewBox="-1 -1 19 16">
<path d="M12.5 0.65 H3.15 Q0.65 0.65 0.65 3.15 V10.85 Q0.65 13.35 3.15 13.35 H10.85 Q13.35 13.35 13.35 10.85 V8" fill="none" stroke="#dcdcdc" stroke-width="1.3"/>
<path d="M3.4 5.9 L7.7 10.3 L15.7 2.1" fill="none" stroke="#dcdcdc" stroke-width="2.7" stroke-linejoin="miter"/>
</svg>
<div class="t" style="left:1292px;top:355.50px;font-size:13px;line-height:13px;color:#333;font-weight:400;letter-spacing:0.267px;">Editable</div>
<div class="a" style="left:262px;top:378px;width:1161px;height:31px;background:#fff;border-bottom:1px solid #e4e4e4"></div>
<div class="a" style="left:293px;top:378px;width:1px;height:30px;background:#e6e6e6;"></div>
<svg style="left:272px;top:386px" width="13" height="12" viewBox="0 0 13 12">
<rect x="0.5" y="0.5" width="11" height="10" rx="1.6" fill="none" stroke="#7a7a7a" stroke-width="1"/>
<path d="M2.5 5.5 H9.5 M5.5 2.2 V8.8" stroke="#7a7a7a" stroke-width="1"/>
</svg>
<div class="t" style="left:304px;top:386.50px;font-size:13px;line-height:13px;color:#333;font-weight:400;letter-spacing:0.223px;">Type</div>
<div class="t" style="left:445px;top:386.50px;font-size:13px;line-height:13px;color:#333;font-weight:400;letter-spacing:0.223px;">Type</div>
<div class="t" style="left:587px;top:386.50px;font-size:13px;line-height:13px;color:#333;font-weight:400;letter-spacing:0px;transform:scaleX(0.9597);transform-origin:0 0;">LOOKUP</div>
<svg style="left:779.2px;top:385.1px" width="19" height="16" viewBox="-1 -1 19 16">
<path d="M12.5 0.65 H3.15 Q0.65 0.65 0.65 3.15 V10.85 Q0.65 13.35 3.15 13.35 H10.85 Q13.35 13.35 13.35 10.85 V8" fill="none" stroke="#dcdcdc" stroke-width="1.3"/>
<path d="M3.4 5.9 L7.7 10.3 L15.7 2.1" fill="none" stroke="#dcdcdc" stroke-width="2.7" stroke-linejoin="miter"/>
</svg>
<svg style="left:920.3px;top:385.3px" width="16" height="16" viewBox="-1 -1 16 16"><rect x="0.65" y="0.65" width="12.7" height="12.7" rx="2.6" fill="none" stroke="#dcdcdc" stroke-width="1.3"/></svg>
<svg style="left:1061.3px;top:385.3px" width="16" height="16" viewBox="-1 -1 16 16"><rect x="0.65" y="0.65" width="12.7" height="12.7" rx="2.6" fill="none" stroke="#dcdcdc" stroke-width="1.3"/></svg>
<svg style="left:1202.2px;top:385.1px" width="19" height="16" viewBox="-1 -1 19 16">
<path d="M12.5 0.65 H3.15 Q0.65 0.65 0.65 3.15 V10.85 Q0.65 13.35 3.15 13.35 H10.85 Q13.35 13.35 13.35 10.85 V8" fill="none" stroke="#dcdcdc" stroke-width="1.3"/>
<path d="M3.4 5.9 L7.7 10.3 L15.7 2.1" fill="none" stroke="#dcdcdc" stroke-width="2.7" stroke-linejoin="miter"/>
</svg>
<div class="t" style="left:1292px;top:386.50px;font-size:13px;line-height:13px;color:#333;font-weight:400;letter-spacing:0.267px;">Editable</div>
<div class="a" style="left:262px;top:409px;width:1161px;height:31px;background:#f5f5f5;border-bottom:1px solid #e4e4e4"></div>
<div class="a" style="left:293px;top:409px;width:1px;height:30px;background:#e6e6e6;"></div>
<svg style="left:272px;top:417px" width="13" height="12" viewBox="0 0 13 12">
<rect x="0.5" y="0.5" width="11" height="10" rx="1.6" fill="none" stroke="#7a7a7a" stroke-width="1"/>
<path d="M2.5 5.5 H9.5 M5.5 2.2 V8.8" stroke="#7a7a7a" stroke-width="1"/>
</svg>
<div class="t" style="left:304px;top:417.50px;font-size:13px;line-height:13px;color:#333;font-weight:400;letter-spacing:0.432px;">Qualification</div>
<div class="t" style="left:445px;top:417.50px;font-size:13px;line-height:13px;color:#333;font-weight:400;letter-spacing:0.432px;">Qualification</div>
<div class="t" style="left:587px;top:417.50px;font-size:13px;line-height:13px;color:#333;font-weight:400;letter-spacing:0px;transform:scaleX(0.9597);transform-origin:0 0;">LOOKUP</div>
<svg style="left:779.2px;top:416.1px" width="19" height="16" viewBox="-1 -1 19 16">
<path d="M12.5 0.65 H3.15 Q0.65 0.65 0.65 3.15 V10.85 Q0.65 13.35 3.15 13.35 H10.85 Q13.35 13.35 13.35 10.85 V8" fill="none" stroke="#dcdcdc" stroke-width="1.3"/>
<path d="M3.4 5.9 L7.7 10.3 L15.7 2.1" fill="none" stroke="#dcdcdc" stroke-width="2.7" stroke-linejoin="miter"/>
</svg>
<svg style="left:920.3px;top:416.3px" width="16" height="16" viewBox="-1 -1 16 16"><rect x="0.65" y="0.65" width="12.7" height="12.7" rx="2.6" fill="none" stroke="#dcdcdc" stroke-width="1.3"/></svg>
<svg style="left:1061.3px;top:416.3px" width="16" height="16" viewBox="-1 -1 16 16"><rect x="0.65" y="0.65" width="12.7" height="12.7" rx="2.6" fill="none" stroke="#dcdcdc" stroke-width="1.3"/></svg>
<svg style="left:1202.2px;top:416.1px" width="19" height="16" viewBox="-1 -1 19 16">
<path d="M12.5 0.65 H3.15 Q0.65 0.65 0.65 3.15 V10.85 Q0.65 13.35 3.15 13.35 H10.85 Q13.35 13.35 13.35 10.85 V8" fill="none" stroke="#dcdcdc" stroke-width="1.3"/>
<path d="M3.4 5.9 L7.7 10.3 L15.7 2.1" fill="none" stroke="#dcdcdc" stroke-width="2.7" stroke-linejoin="miter"/>
</svg>
<div class="t" style="left:1292px;top:417.50px;font-size:13px;line-height:13px;color:#333;font-weight:400;letter-spacing:0.267px;">Editable</div>
<div class="a" style="left:262px;top:440px;width:1161px;height:31px;background:#fff;border-bottom:1px solid #e4e4e4"></div>
<div class="a" style="left:293px;top:440px;width:1px;height:30px;background:#e6e6e6;"></div>
<svg style="left:272px;top:448px" width="13" height="12" viewBox="0 0 13 12">
<rect x="0.5" y="0.5" width="11" height="10" rx="1.6" fill="none" stroke="#7a7a7a" stroke-width="1"/>
<path d="M2.5 5.5 H9.5 M5.5 2.2 V8.8" stroke="#7a7a7a" stroke-width="1"/>
</svg>
<div class="t" style="left:304px;top:448.50px;font-size:13px;line-height:13px;color:#333;font-weight:400;letter-spacing:0.03px;">Level</div>
<div class="t" style="left:445px;top:448.50px;font-size:13px;line-height:13px;color:#333;font-weight:400;letter-spacing:0.03px;">Level</div>
<div class="t" style="left:587px;top:448.50px;font-size:13px;line-height:13px;color:#333;font-weight:400;letter-spacing:0px;transform:scaleX(0.9597);transform-origin:0 0;">LOOKUP</div>
<svg style="left:779.2px;top:447.1px" width="16" height="16" viewBox="-1 -1 16 16"><rect x="0.65" y="0.65" width="12.7" height="12.7" rx="2.6" fill="none" stroke="#dcdcdc" stroke-width="1.3"/></svg>
<svg style="left:920.3px;top:447.3px" width="16" height="16" viewBox="-1 -1 16 16"><rect x="0.65" y="0.65" width="12.7" height="12.7" rx="2.6" fill="none" stroke="#dcdcdc" stroke-width="1.3"/></svg>
<svg style="left:1061.3px;top:447.3px" width="16" height="16" viewBox="-1 -1 16 16"><rect x="0.65" y="0.65" width="12.7" height="12.7" rx="2.6" fill="none" stroke="#dcdcdc" stroke-width="1.3"/></svg>
<svg style="left:1202.2px;top:447.1px" width="19" height="16" viewBox="-1 -1 19 16">
<path d="M12.5 0.65 H3.15 Q0.65 0.65 0.65 3.15 V10.85 Q0.65 13.35 3.15 13.35 H10.85 Q13.35 13.35 13.35 10.85 V8" fill="none" stroke="#dcdcdc" stroke-width="1.3"/>
<path d="M3.4 5.9 L7.7 10.3 L15.7 2.1" fill="none" stroke="#dcdcdc" stroke-width="2.7" stroke-linejoin="miter"/>
</svg>
<div class="t" style="left:1292px;top:448.50px;font-size:13px;line-height:13px;color:#333;font-weight:400;letter-spacing:0.267px;">Editable</div>
<div class="a" style="left:262px;top:471px;width:1161px;height:31px;background:#f5f5f5;border-bottom:1px solid #e4e4e4"></div>
<div class="a" style="left:293px;top:471px;width:1px;height:30px;background:#e6e6e6;"></div>
<svg style="left:272px;top:479px" width="13" height="12" viewBox="0 0 13 12">
<rect x="0.5" y="0.5" width="11" height="10" rx="1.6" fill="none" stroke="#7a7a7a" stroke-width="1"/>
<path d="M2.5 5.5 H9.5 M5.5 2.2 V8.8" stroke="#7a7a7a" stroke-width="1"/>
</svg>
<div class="t" style="left:304px;top:479.50px;font-size:13px;line-height:13px;color:#333;font-weight:400;letter-spacing:0.153px;">Email</div>
<div class="t" style="left:445px;top:479.50px;font-size:13px;line-height:13px;color:#333;font-weight:400;letter-spacing:0.153px;">Email</div>
<div class="t" style="left:587px;top:479.50px;font-size:13px;line-height:13px;color:#333;font-weight:400;letter-spacing:0px;transform:scaleX(0.9161);transform-origin:0 0;">STRING</div>
<svg style="left:779.2px;top:478.1px" width="19" height="16" viewBox="-1 -1 19 16">
<path d="M12.5 0.65 H3.15 Q0.65 0.65 0.65 3.15 V10.85 Q0.65 13.35 3.15 13.35 H10.85 Q13.35 13.35 13.35 10.85 V8" fill="none" stroke="#dcdcdc" stroke-width="1.3"/>
<path d="M3.4 5.9 L7.7 10.3 L15.7 2.1" fill="none" stroke="#dcdcdc" stroke-width="2.7" stroke-linejoin="miter"/>
</svg>
<svg style="left:920.3px;top:478.3px" width="16" height="16" viewBox="-1 -1 16 16"><rect x="0.65" y="0.65" width="12.7" height="12.7" rx="2.6" fill="none" stroke="#dcdcdc" stroke-width="1.3"/></svg>
<svg style="left:1061.3px;top:478.3px" width="16" height="16" viewBox="-1 -1 16 16"><rect x="0.65" y="0.65" width="12.7" height="12.7" rx="2.6" fill="none" stroke="#dcdcdc" stroke-width="1.3"/></svg>
<svg style="left:1202.2px;top:478.1px" width="19" height="16" viewBox="-1 -1 19 16">
<path d="M12.5 0.65 H3.15 Q0.65 0.65 0.65 3.15 V10.85 Q0.65 13.35 3.15 13.35 H10.85 Q13.35 13.35 13.35 10.85 V8" fill="none" stroke="#dcdcdc" stroke-width="1.3"/>
<path d="M3.4 5.9 L7.7 10.3 L15.7 2.1" fill="none" stroke="#dcdcdc" stroke-width="2.7" stroke-linejoin="miter"/>
</svg>
<div class="t" style="left:1292px;top:479.50px;font-size:13px;line-height:13px;color:#333;font-weight:400;letter-spacing:0.267px;">Editable</div>
<div class="a" style="left:262px;top:502px;width:1161px;height:31px;background:#fff;border-bottom:1px solid #e4e4e4"></div>
<div class="a" style="left:293px;top:502px;width:1px;height:30px;background:#e6e6e6;"></div>
<svg style="left:272px;top:510px" width="13" height="12" viewBox="0 0 13 12">
<rect x="0.5" y="0.5" width="11" height="10" rx="1.6" fill="none" stroke="#7a7a7a" stroke-width="1"/>
<path d="M2.5 5.5 H9.5 M5.5 2.2 V8.8" stroke="#7a7a7a" stroke-width="1"/>
</svg>
<div class="t" style="left:304px;top:510.50px;font-size:13px;line-height:13px;color:#333;font-weight:400;letter-spacing:0.397px;">Office</div>
<div class="t" style="left:445px;top:510.50px;font-size:13px;line-height:13px;color:#333;font-weight:400;letter-spacing:0.397px;">Office</div>
<div class="t" style="left:587px;top:510.50px;font-size:13px;line-height:13px;color:#333;font-weight:400;letter-spacing:0px;transform:scaleX(0.8693);transform-origin:0 0;">REFERENCE</div>
<svg style="left:779.2px;top:509.1px" width="19" height="16" viewBox="-1 -1 19 16">
<path d="M12.5 0.65 H3.15 Q0.65 0.65 0.65 3.15 V10.85 Q0.65 13.35 3.15 13.35 H10.85 Q13.35 13.35 13.35 10.85 V8" fill="none" stroke="#dcdcdc" stroke-width="1.3"/>
<path d="M3.4 5.9 L7.7 10.3 L15.7 2.1" fill="none" stroke="#dcdcdc" stroke-width="2.7" stroke-linejoin="miter"/>
</svg>
<svg style="left:920.3px;top:509.3px" width="16" height="16" viewBox="-1 -1 16 16"><rect x="0.65" y="0.65" width="12.7" height="12.7" rx="2.6" fill="none" stroke="#dcdcdc" stroke-width="1.3"/></svg>
<svg style="left:1061.3px;top:509.3px" width="16" height="16" viewBox="-1 -1 16 16"><rect x="0.65" y="0.65" width="12.7" height="12.7" rx="2.6" fill="none" stroke="#dcdcdc" stroke-width="1.3"/></svg>
<svg style="left:1202.2px;top:509.1px" width="19" height="16" viewBox="-1 -1 19 16">
<path d="M12.5 0.65 H3.15 Q0.65 0.65 0.65 3.15 V10.85 Q0.65 13.35 3.15 13.35 H10.85 Q13.35 13.35 13.35 10.85 V8" fill="none" stroke="#dcdcdc" stroke-width="1.3"/>
<path d="M3.4 5.9 L7.7 10.3 L15.7 2.1" fill="none" stroke="#dcdcdc" stroke-width="2.7" stroke-linejoin="miter"/>
</svg>
<div class="t" style="left:1292px;top:510.50px;font-size:13px;line-height:13px;color:#333;font-weight:400;letter-spacing:0.267px;">Editable</div>
<div class="a" style="left:262px;top:533px;width:1161px;height:31px;background:#f5f5f5;border-bottom:1px solid #e4e4e4"></div>
<div class="a" style="left:293px;top:533px;width:1px;height:30px;background:#e6e6e6;"></div>
<svg style="left:272px;top:541px" width="13" height="12" viewBox="0 0 13 12">
<rect x="0.5" y="0.5" width="11" height="10" rx="1.6" fill="none" stroke="#7a7a7a" stroke-width="1"/>
<path d="M2.5 5.5 H9.5 M5.5 2.2 V8.8" stroke="#7a7a7a" stroke-width="1"/>
</svg>
<div class="t" style="left:304px;top:541.50px;font-size:13px;line-height:13px;color:#333;font-weight:400;letter-spacing:0.334px;">Phone</div>
<div class="t" style="left:445px;top:541.50px;font-size:13px;line-height:13px;color:#333;font-weight:400;letter-spacing:0.334px;">Phone</div>
<div class="t" style="left:587px;top:541.50px;font-size:13px;line-height:13px;color:#333;font-weight:400;letter-spacing:0px;transform:scaleX(0.9161);transform-origin:0 0;">STRING</div>
<svg style="left:779.2px;top:540.1px" width="19" height="16" viewBox="-1 -1 19 16">
<path d="M12.5 0.65 H3.15 Q0.65 0.65 0.65 3.15 V10.85 Q0.65 13.35 3.15 13.35 H10.85 Q13.35 13.35 13.35 10.85 V8" fill="none" stroke="#dcdcdc" stroke-width="1.3"/>
<path d="M3.4 5.9 L7.7 10.3 L15.7 2.1" fill="none" stroke="#dcdcdc" stroke-width="2.7" stroke-linejoin="miter"/>
</svg>
<svg style="left:920.3px;top:540.3px" width="16" height="16" viewBox="-1 -1 16 16"><rect x="0.65" y="0.65" width="12.7" height="12.7" rx="2.6" fill="none" stroke="#dcdcdc" stroke-width="1.3"/></svg>
<svg style="left:1061.3px;top:540.3px" width="16" height="16" viewBox="-1 -1 16 16"><rect x="0.65" y="0.65" width="12.7" height="12.7" rx="2.6" fill="none" stroke="#dcdcdc" stroke-width="1.3"/></svg>
<svg style="left:1202.2px;top:540.1px" width="19" height="16" viewBox="-1 -1 19 16">
<path d="M12.5 0.65 H3.15 Q0.65 0.65 0.65 3.15 V10.85 Q0.65 13.35 3.15 13.35 H10.85 Q13.35 13.35 13.35 10.85 V8" fill="none" stroke="#dcdcdc" stroke-width="1.3"/>
<path d="M3.4 5.9 L7.7 10.3 L15.7 2.1" fill="none" stroke="#dcdcdc" stroke-width="2.7" stroke-linejoin="miter"/>
</svg>
<div class="t" style="left:1292px;top:541.50px;font-size:13px;line-height:13px;color:#333;font-weight:400;letter-spacing:0.267px;">Editable</div>
<div class="a" style="left:262px;top:564px;width:1161px;height:31px;background:#fff;border-bottom:1px solid #e4e4e4"></div>
<div class="a" style="left:293px;top:564px;width:1px;height:30px;background:#e6e6e6;"></div>
<svg style="left:272px;top:572px" width="13" height="12" viewBox="0 0 13 12">
<rect x="0.5" y="0.5" width="11" height="10" rx="1.6" fill="none" stroke="#7a7a7a" stroke-width="1"/>
<path d="M2.5 5.5 H9.5 M5.5 2.2 V8.8" stroke="#7a7a7a" stroke-width="1"/>
</svg>
<div class="t" style="left:304px;top:572.50px;font-size:13px;line-height:13px;color:#333;font-weight:400;letter-spacing:0.626px;">Mobile</div>
<div class="t" style="left:445px;top:572.50px;font-size:13px;line-height:13px;color:#333;font-weight:400;letter-spacing:0.626px;">Mobile</div>
<div class="t" style="left:587px;top:572.50px;font-size:13px;line-height:13px;color:#333;font-weight:400;letter-spacing:0px;transform:scaleX(0.9161);transform-origin:0 0;">STRING</div>
<svg style="left:779.2px;top:571.1px" width="16" height="16" viewBox="-1 -1 16 16"><rect x="0.65" y="0.65" width="12.7" height="12.7" rx="2.6" fill="none" stroke="#dcdcdc" stroke-width="1.3"/></svg>
<svg style="left:920.3px;top:571.3px" width="16" height="16" viewBox="-1 -1 16 16"><rect x="0.65" y="0.65" width="12.7" height="12.7" rx="2.6" fill="none" stroke="#dcdcdc" stroke-width="1.3"/></svg>
<svg style="left:1061.3px;top:571.3px" width="16" height="16" viewBox="-1 -1 16 16"><rect x="0.65" y="0.65" width="12.7" height="12.7" rx="2.6" fill="none" stroke="#dcdcdc" stroke-width="1.3"/></svg>
<svg style="left:1202.2px;top:571.1px" width="19" height="16" viewBox="-1 -1 19 16">
<path d="M12.5 0.65 H3.15 Q0.65 0.65 0.65 3.15 V10.85 Q0.65 13.35 3.15 13.35 H10.85 Q13.35 13.35 13.35 10.85 V8" fill="none" stroke="#dcdcdc" stroke-width="1.3"/>
<path d="M3.4 5.9 L7.7 10.3 L15.7 2.1" fill="none" stroke="#dcdcdc" stroke-width="2.7" stroke-linejoin="miter"/>
</svg>
<div class="t" style="left:1292px;top:572.50px;font-size:13px;line-height:13px;color:#333;font-weight:400;letter-spacing:0.267px;">Editable</div>
<div class="a" style="left:262px;top:595px;width:1161px;height:31px;background:#f5f5f5;border-bottom:1px solid #e4e4e4"></div>
<div class="a" style="left:293px;top:595px;width:1px;height:30px;background:#e6e6e6;"></div>
<svg style="left:272px;top:603px" width="13" height="12" viewBox="0 0 13 12">
<rect x="0.5" y="0.5" width="11" height="10" rx="1.6" fill="none" stroke="#7a7a7a" stroke-width="1"/>
<path d="M2.5 5.5 H9.5 M5.5 2.2 V8.8" stroke="#7a7a7a" stroke-width="1"/>
</svg>
<div class="t" style="left:304px;top:603.50px;font-size:13px;line-height:13px;color:#333;font-weight:400;letter-spacing:-0.461px;">Fax</div>
<div class="t" style="left:445px;top:603.50px;font-size:13px;line-height:13px;color:#333;font-weight:400;letter-spacing:-0.461px;">Fax</div>
<div class="t" style="left:587px;top:603.50px;font-size:13px;line-height:13px;color:#333;font-weight:400;letter-spacing:0px;transform:scaleX(0.9161);transform-origin:0 0;">STRING</div>
<svg style="left:779.2px;top:602.1px" width="16" height="16" viewBox="-1 -1 16 16"><rect x="0.65" y="0.65" width="12.7" height="12.7" rx="2.6" fill="none" stroke="#dcdcdc" stroke-width="1.3"/></svg>
<svg style="left:920.3px;top:602.3px" width="16" height="16" viewBox="-1 -1 16 16"><rect x="0.65" y="0.65" width="12.7" height="12.7" rx="2.6" fill="none" stroke="#dcdcdc" stroke-width="1.3"/></svg>
<svg style="left:1061.3px;top:602.3px" width="16" height="16" viewBox="-1 -1 16 16"><rect x="0.65" y="0.65" width="12.7" height="12.7" rx="2.6" fill="none" stroke="#dcdcdc" stroke-width="1.3"/></svg>
<svg style="left:1202.2px;top:602.1px" width="19" height="16" viewBox="-1 -1 19 16">
<path d="M12.5 0.65 H3.15 Q0.65 0.65 0.65 3.15 V10.85 Q0.65 13.35 3.15 13.35 H10.85 Q13.35 13.35 13.35 10.85 V8" fill="none" stroke="#dcdcdc" stroke-width="1.3"/>
<path d="M3.4 5.9 L7.7 10.3 L15.7 2.1" fill="none" stroke="#dcdcdc" stroke-width="2.7" stroke-linejoin="miter"/>
</svg>
<div class="t" style="left:1292px;top:603.50px;font-size:13px;line-height:13px;color:#333;font-weight:400;letter-spacing:0.267px;">Editable</div>
<div class="a" style="left:262px;top:626px;width:1161px;height:31px;background:#fff;border-bottom:1px solid #e4e4e4"></div>
<div class="a" style="left:293px;top:626px;width:1px;height:30px;background:#e6e6e6;"></div>
<svg style="left:272px;top:634px" width="13" height="12" viewBox="0 0 13 12">
<rect x="0.5" y="0.5" width="11" height="10" rx="1.6" fill="none" stroke="#7a7a7a" stroke-width="1"/>
<path d="M2.5 5.5 H9.5 M5.5 2.2 V8.8" stroke="#7a7a7a" stroke-width="1"/>
</svg>
<div class="t" style="left:304px;top:634.50px;font-size:13px;line-height:13px;color:#333;font-weight:400;letter-spacing:0.088px;">State</div>
<div class="t" style="left:445px;top:634.50px;font-size:13px;line-height:13px;color:#333;font-weight:400;letter-spacing:0.088px;">State</div>
<div class="t" style="left:587px;top:634.50px;font-size:13px;line-height:13px;color:#333;font-weight:400;letter-spacing:0px;transform:scaleX(0.9597);transform-origin:0 0;">LOOKUP</div>
<svg style="left:779.2px;top:633.1px" width="19" height="16" viewBox="-1 -1 19 16">
<path d="M12.5 0.65 H3.15 Q0.65 0.65 0.65 3.15 V10.85 Q0.65 13.35 3.15 13.35 H10.85 Q13.35 13.35 13.35 10.85 V8" fill="none" stroke="#dcdcdc" stroke-width="1.3"/>
<path d="M3.4 5.9 L7.7 10.3 L15.7 2.1" fill="none" stroke="#dcdcdc" stroke-width="2.7" stroke-linejoin="miter"/>
</svg>
<svg style="left:920.3px;top:633.3px" width="16" height="16" viewBox="-1 -1 16 16"><rect x="0.65" y="0.65" width="12.7" height="12.7" rx="2.6" fill="none" stroke="#dcdcdc" stroke-width="1.3"/></svg>
<svg style="left:1061.3px;top:633.3px" width="16" height="16" viewBox="-1 -1 16 16"><rect x="0.65" y="0.65" width="12.7" height="12.7" rx="2.6" fill="none" stroke="#dcdcdc" stroke-width="1.3"/></svg>
<svg style="left:1202.2px;top:633.1px" width="19" height="16" viewBox="-1 -1 19 16">
<path d="M12.5 0.65 H3.15 Q0.65 0.65 0.65 3.15 V10.85 Q0.65 13.35 3.15 13.35 H10.85 Q13.35 13.35 13.35 10.85 V8" fill="none" stroke="#dcdcdc" stroke-width="1.3"/>
<path d="M3.4 5.9 L7.7 10.3 L15.7 2.1" fill="none" stroke="#dcdcdc" stroke-width="2.7" stroke-linejoin="miter"/>
</svg>
<div class="t" style="left:1292px;top:634.50px;font-size:13px;line-height:13px;color:#333;font-weight:400;letter-spacing:0.267px;">Editable</div>
<div class="a" style="left:2px;top:732px;width:1436px;height:28px;background:#ebebeb;border-top:1px solid #d2d2d2"></div>
<div class="t" style="left:565.3px;top:740.92px;font-size:12.5px;line-height:12.5px;color:#555;font-weight:400;letter-spacing:0.1px;">www.cmdbuild.org</div>
<div class="t" style="left:686px;top:739.10px;font-size:13px;line-height:13px;color:#555;font-weight:400;letter-spacing:0px;">·</div>
<div class="t" style="left:708.3px;top:740.92px;font-size:12.5px;line-height:12.5px;color:#555;font-weight:400;letter-spacing:0.55px;">Info</div>
<div class="t" style="left:750.3px;top:739.10px;font-size:13px;line-height:13px;color:#555;font-weight:400;letter-spacing:0px;">·</div>
<div class="t" style="left:772px;top:740.92px;font-size:12.5px;line-height:12.5px;color:#555;font-weight:400;letter-spacing:-0.2px;">Copyright © Tecnoteca srl</div>
<div class="a" style="left:0px;top:0px;width:1440px;height:1px;background:#ffe000;"></div>
<div class="a" style="left:0px;top:1px;width:1440px;height:1px;background:#d4b300;"></div>
<div class="a" style="left:0px;top:0px;width:2px;height:762px;background:#24517a;"></div>
<div class="a" style="left:0px;top:760px;width:1440px;height:2px;background:#24517a;"></div>
<div class="a" style="left:1438px;top:0px;width:2px;height:760px;background:#2196f3;"></div>
</body></html>
